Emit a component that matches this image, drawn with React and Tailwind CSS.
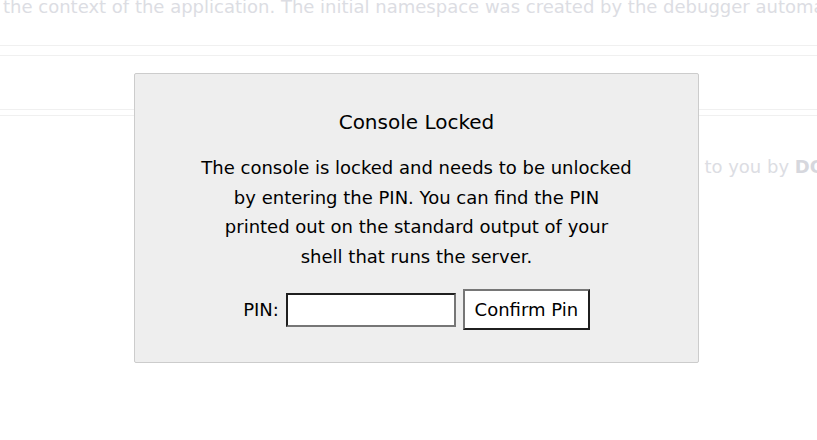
import React from 'react';

export default function App() {
  return (
    <div className="relative w-[817px] h-[440px] overflow-hidden bg-white" style={{ fontFamily: '"DejaVu Sans", sans-serif' }}>

      {/* faded page behind the lock */}
      <div className="text-[#dcdde3]">
        <p className="whitespace-nowrap text-[18px] leading-[22px] -mt-[4px] pl-[3px]">
          the context of the application. The initial namespace was created by the debugger automatically.
        </p>
        <div className="mt-[27px] border-y border-[#f0f0f0] pt-[9px] pb-[5px]">
          <div className="border-y border-[#f0f0f0] h-[55px]" />
        </div>
        <p className="whitespace-nowrap text-[18px] leading-[22px] mt-[40px] pl-[627px]">
          Brought to you by <b className="text-[#d6d7dd]">DON'T PANIC</b>, your friendly Werkzeug powered traceback interpreter.
        </p>
      </div>

      {/* lock prompt */}
      <div className="absolute left-[134px] top-[73px] w-[565px] h-[290px] bg-[#eeeeee] border border-[#cccccc] rounded-[2px] flex flex-col items-center text-black">
        <h3 className="mt-[34px] text-[20px] leading-[28px]">Console Locked</h3>
        <p className="mt-[17px] text-[18px] leading-[29.5px] text-center whitespace-nowrap">
          The console is locked and needs to be unlocked<br />
          by entering the PIN. You can find the PIN<br />
          printed out on the standard output of your<br />
          shell that runs the server.
        </p>
        <div className="mt-[18px] flex items-center gap-[7px] text-[18px]">
          <span>PIN:</span>
          <input
            type="text"
            className="w-[170px] h-[34px] bg-white border-2 border-t-[#1f1f1f] border-l-[#1f1f1f] border-r-[#767676] border-b-[#767676] outline-none px-1"
          />
          <button className="w-[127px] h-[41px] bg-white border-2 border-t-[#767676] border-l-[#767676] border-r-[#1f1f1f] border-b-[#1f1f1f] text-[18px]">
            Confirm Pin
          </button>
        </div>
      </div>
    </div>
  );
}
